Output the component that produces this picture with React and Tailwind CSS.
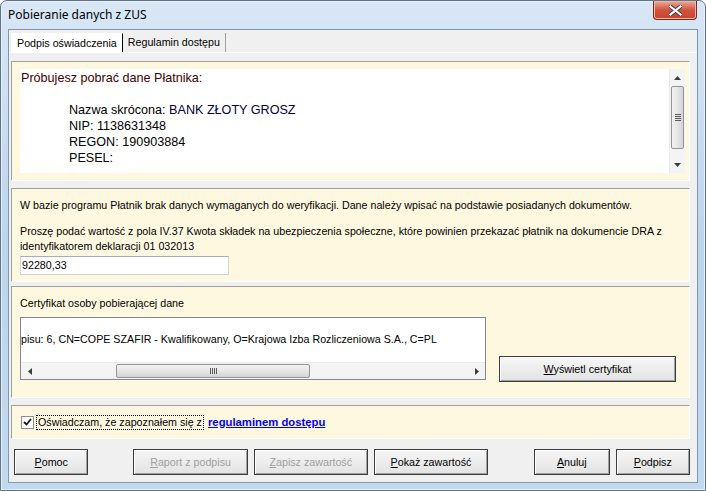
import React from 'react';

const font = { fontFamily: '"Liberation Sans", Arial, sans-serif' };

const Btn = ({ mnemonic, rest, disabled, className = '' }) => (
    <button
        className={`h-[26px] border border-[#3c3c3c] bg-gradient-to-b from-[#f6f6f6] to-[#e3e3e3] shadow-[inset_1px_1px_0_#ffffff,inset_-1px_-1px_0_#a0a0a0] text-[10.7px] ${disabled ? 'text-[#a0a0a0]' : 'text-black'} ${className}`}
    >
        <span className="underline">{mnemonic}</span>
        {rest}
    </button>
);

const VScroll = () => (
    <div className="w-[16px] flex flex-col bg-[#f4f4f4] border-l border-[#e8e8e8]">
        <div className="h-[17px] flex items-center justify-center">
            <svg width="7" height="4" viewBox="0 0 7 4"><path d="M0 4 L3.5 0 L7 4 Z" fill="#3c3c3c" /></svg>
        </div>
        <div className="h-[63px] mx-[1px] rounded-[2px] border border-[#959595] bg-gradient-to-r from-[#f2f2f2] via-[#e6e6e6] to-[#d4d4d4] flex items-center justify-center">
            <div className="flex flex-col gap-[1px]">
                <div className="w-[6px] h-[1px] bg-[#5a5a5a]" />
                <div className="w-[6px] h-[1px] bg-[#5a5a5a]" />
                <div className="w-[6px] h-[1px] bg-[#5a5a5a]" />
                <div className="w-[6px] h-[1px] bg-[#5a5a5a]" />
            </div>
        </div>
        <div className="flex-1" />
        <div className="h-[17px] flex items-center justify-center">
            <svg width="7" height="4" viewBox="0 0 7 4"><path d="M0 0 L7 0 L3.5 4 Z" fill="#3c3c3c" /></svg>
        </div>
    </div>
);

const HScroll = () => (
    <div className="h-[17px] flex bg-[#f4f4f4] border-t border-[#e8e8e8]">
        <div className="w-[17px] flex items-center justify-center">
            <svg width="4" height="7" viewBox="0 0 4 7"><path d="M4 0 L0 3.5 L4 7 Z" fill="#3c3c3c" /></svg>
        </div>
        <div className="w-[78px]" />
        <div className="w-[194px] my-[1px] rounded-[2px] border border-[#959595] bg-gradient-to-b from-[#f2f2f2] via-[#e6e6e6] to-[#d4d4d4] flex items-center justify-center">
            <div className="flex gap-[1px]">
                <div className="w-[1px] h-[6px] bg-[#5a5a5a]" />
                <div className="w-[1px] h-[6px] bg-[#5a5a5a]" />
                <div className="w-[1px] h-[6px] bg-[#5a5a5a]" />
                <div className="w-[1px] h-[6px] bg-[#5a5a5a]" />
            </div>
        </div>
        <div className="flex-1" />
        <div className="w-[17px] flex items-center justify-center">
            <svg width="4" height="7" viewBox="0 0 4 7"><path d="M0 0 L4 3.5 L0 7 Z" fill="#3c3c3c" /></svg>
        </div>
    </div>
);

const Panel = ({ className = '', children }) => (
    <div className={`bg-[#fff8e1] border-t border-l border-[#a0a0a0] border-b border-r border-b-white border-r-white ${className}`}>
        {children}
    </div>
);

const App = () => {
    return (
        <div className="w-[706px] h-[491px] bg-white" style={font}>
            <div className="w-full h-full flex flex-col rounded-t-[7px] border border-[#5f7488] bg-gradient-to-b from-[#d9e7f5] via-[#bcd4ec] to-[#c3d9ef] shadow-[inset_0_0_0_1px_#e6f0fa]">
                {/* title bar */}
                <div className="h-[28px] flex items-start justify-between pl-[7px] pr-[8px]">
                    <div className="pt-[5px] text-[12px] text-black" style={{ fontFamily: '"Noto Sans", "Open Sans", sans-serif' }}>
                        Pobieranie danych z ZUS
                    </div>
                    <div className="w-[44px] h-[19px] rounded-b-[4px] border border-t-0 border-[#7a2a1c] bg-gradient-to-b from-[#e9a99b] via-[#d2523c] to-[#c6452f] flex items-center justify-center shadow-[inset_0_0_0_1px_#f0b8a8]">
                        <svg width="13" height="11" viewBox="0 0 13 11">
                            <path d="M1.5 1.5 L11.5 9.5 M11.5 1.5 L1.5 9.5" stroke="#3a3a4a" strokeWidth="4" strokeLinecap="square" />
                            <path d="M1.5 1.5 L11.5 9.5 M11.5 1.5 L1.5 9.5" stroke="#ffffff" strokeWidth="2.2" strokeLinecap="square" />
                        </svg>
                    </div>
                </div>

                {/* client area */}
                <div className="flex-1 mx-[7px] mb-[7px] border border-[#8096ae] bg-[#f0f0f0] flex flex-col">
                    {/* tabs */}
                    <div className="h-[22px] pt-[3px] pl-[2px] flex items-stretch text-[10.7px]">
                        <div className="px-[5px] bg-white border-l border-t border-white border-r border-r-black flex items-center">
                            Podpis oświadczenia
                        </div>
                        <div className="px-[5px] border-r border-[#a0a0a0] flex items-center">
                            Regulamin dostępu
                        </div>
                    </div>
                    <div className="flex-1 border-t border-white flex flex-col pl-[2px] pr-[7px] pt-[8px] text-[10.7px]">
                        {/* panel 1 */}
                        <Panel className="h-[120px] pl-[8px] pr-[4px] pt-[7px] pb-[7px]">
                            <div className="h-full bg-white flex">
                                <div className="flex-1 pl-[1px] pt-[1px] text-[12.6px] leading-[16px]">
                                    <div className="text-[#400000]">Próbujesz pobrać dane Płatnika:</div>
                                    <div className="pl-[48px] pt-[16px] text-black">
                                        <div>Nazwa skrócona: <span className="text-[#000040]">BANK ZŁOTY GROSZ</span></div>
                                        <div>NIP: 1138631348</div>
                                        <div>REGON: 190903884</div>
                                        <div>PESEL:</div>
                                    </div>
                                </div>
                                <VScroll />
                            </div>
                        </Panel>

                        {/* panel 2 */}
                        <Panel className="mt-[7px] h-[94px] pl-[8px] pt-[9px]">
                            <div className="leading-[14px]">
                                W bazie programu Płatnik brak danych wymaganych do weryfikacji. Dane należy wpisać na podstawie posiadanych dokumentów.
                            </div>
                            <div className="mt-[12px] leading-[15px] pr-[6px]">
                                Proszę podać wartość z pola IV.37 Kwota składek na ubezpieczenia społeczne, które powinien przekazać płatnik na dokumencie DRA z identyfikatorem deklaracji 01 032013
                            </div>
                            <div className="mt-[2px] w-[209px] h-[19px] bg-white border border-[#d5d5d5] border-t-[#abadb3] flex items-center pl-[1px]">
                                92280,33
                            </div>
                        </Panel>

                        {/* panel 3 */}
                        <Panel className="mt-[4px] h-[112px] pl-[8px] pt-[9px] pr-[13px]">
                            <div className="leading-[14px]">Certyfikat osoby pobierającej dane</div>
                            <div className="mt-[7px] flex items-end justify-between">
                                <div className="w-[466px] h-[63px] bg-white border border-[#828790] flex flex-col">
                                    <div className="flex-1 pt-[13px] whitespace-nowrap overflow-hidden">
                                        pisu: 6, CN=COPE SZAFIR - Kwalifikowany, O=Krajowa Izba Rozliczeniowa S.A., C=PL
                                    </div>
                                    <HScroll />
                                </div>
                                <Btn mnemonic="W" rest="yświetl certyfikat" className="w-[177px] mb-[-2px]" />
                            </div>
                        </Panel>

                        {/* panel 4 */}
                        <Panel className="mt-[7px] h-[34px] pl-[9px] flex items-center">
                            <div className="flex items-center">
                                <div className="w-[13px] h-[13px] bg-white border border-[#8f8f8f] flex items-center justify-center">
                                    <svg width="9" height="8" viewBox="0 0 9 8">
                                        <path d="M1 4 L3.5 6.5 L8 1" stroke="#1a1a1a" strokeWidth="1.8" fill="none" />
                                    </svg>
                                </div>
                                <div className="ml-[2px] px-[1px] border border-dotted border-black leading-[13px]">
                                    Oświadczam, że zapoznałem się z
                                </div>
                                <div className="ml-[4px] font-bold text-[#0000ff] underline text-[11.3px]">
                                    regulaminem dostępu
                                </div>
                            </div>
                        </Panel>

                        {/* buttons */}
                        <div className="mt-[10px] flex items-center">
                            <Btn mnemonic="P" rest="omoc" className="w-[75px] ml-[3px]" />
                            <Btn mnemonic="R" rest="aport z podpisu" disabled className="w-[115px] ml-[45px]" />
                            <Btn mnemonic="Z" rest="apisz zawartość" disabled className="w-[115px] ml-[6px]" />
                            <Btn mnemonic="P" rest="okaż zawartość" className="w-[115px] ml-[6px]" />
                            <Btn mnemonic="A" rest="nuluj" className="w-[76px] ml-[46px]" />
                            <Btn mnemonic="P" rest="odpisz" className="w-[75px] ml-[6px]" />
                        </div>
                    </div>
                </div>
            </div>
        </div>
    );
};

export default App;
